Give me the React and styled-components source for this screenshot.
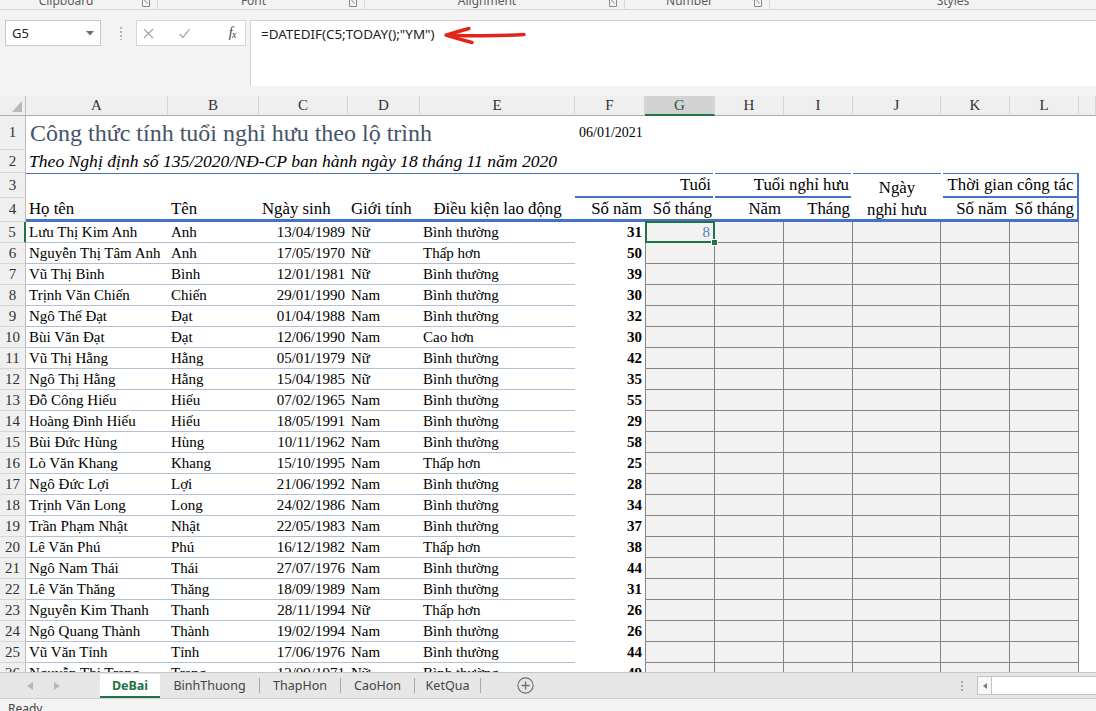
import React from 'react';
import styled, { createGlobalStyle, css } from 'styled-components';

const UI = '"Noto Sans", "Liberation Sans", Arial, sans-serif';
const SERIF = '"Liberation Serif", "Times New Roman", serif';
const BLUE = '#4472c4';
const GREEN = '#217346';

const GlobalStyle = createGlobalStyle`
  html, body { margin: 0; padding: 0; background: #fff; overflow: hidden; }
  #root { width: 1096px; height: 711px; }
`;

const Window = styled.div`
  width: 1096px;
  height: 711px;
  display: flex;
  flex-direction: column;
  overflow: hidden;
  font-family: ${SERIF};
  background: #fff;
`;

/* ---------- ribbon group labels (cut off) ---------- */
const RibbonStrip = styled.div`
  flex: none;
  height: 9px;
  display: flex;
  background: #f3f3f3;
  border-bottom: 1px solid #d6d6d6;
  overflow: hidden;
`;
const RibbonGroup = styled.div`
  flex: none;
  width: ${p => p.$w}px;
  display: flex;
  align-items: flex-start;
  border-right: ${p => (p.$last ? 'none' : '1px solid #d9d9d9')};
  box-sizing: border-box;
`;
const GroupLabel = styled.span`
  flex: 1;
  text-align: center;
  font-family: ${UI};
  font-size: 12px;
  line-height: 16px;
  margin-top: -7px;
  padding-right: ${p => p.$pr || 0}px;
  color: #5b5b5b;
`;
const LauncherIcon = styled.svg`
  flex: none;
  width: 8px;
  height: 7px;
  margin-right: 7px;
`;

/* ---------- formula bar ---------- */
const FormulaArea = styled.div`
  position: relative;
  flex: none;
  height: 86px;
  box-sizing: border-box;
  padding: 10px 0 0 5px;
  display: flex;
  align-items: flex-start;
  background: #f3f3f3;
`;
const NameBox = styled.div`
  flex: none;
  width: 96px;
  height: 26px;
  box-sizing: border-box;
  background: #fff;
  border: 1px solid #c8c8c8;
  display: flex;
  align-items: center;
  justify-content: space-between;
  padding: 0 6px 0 6px;
  font-family: ${UI};
  font-size: 13px;
  color: #222;
`;
const Grip = styled.div`
  flex: none;
  width: 2px;
  height: 14px;
  margin: 6px 14px 0 19px;
  background-image: radial-gradient(circle, #b5b5b5 0.9px, transparent 1.1px);
  background-size: 2px 4px;
`;
const FxBox = styled.div`
  flex: none;
  width: 110px;
  height: 26px;
  box-sizing: border-box;
  background: #fff;
  border: 1px solid #d6d6d6;
  display: flex;
  align-items: center;
  padding-left: 6px;
`;
const FxIcon = styled.svg`
  flex: none;
  width: 11px;
  height: 11px;
  margin-right: ${p => p.$mr}px;
`;
const FxLabel = styled.span`
  margin-left: auto;
  margin-right: 9px;
  font-family: ${SERIF};
  font-style: italic;
  font-size: 14px;
  color: #444;
  letter-spacing: -0.5px;
  sub { font-size: 10px; vertical-align: -1px; }
`;
const FormulaInput = styled.div`
  flex: 1;
  height: 66px;
  margin-left: 4px;
  box-sizing: border-box;
  background: #fff;
  border-left: 1px solid #d2d2d2;
  border-top: 1px solid #d2d2d2;
  padding: 5px 10px;
  font-family: ${UI};
  font-size: 13.4px;
  line-height: 17px;
  color: #222;
`;
const Annotation = styled.svg`
  position: absolute;
  left: 440px;
  top: 12px;
  width: 90px;
  height: 26px;
  overflow: visible;
`;

/* ---------- sheet grid ---------- */
const COLS = [26, 142, 91, 89, 72, 155, 70, 70, 69, 69, 88, 69, 69];
const Sheet = styled.div`
  flex: none;
  height: 576px;
  overflow: hidden;
  display: grid;
  grid-template-columns: ${COLS.map(w => w + 'px').join(' ')} 1fr;
  grid-template-rows: 20px 34px 23px 25px 24px;
  grid-auto-rows: 21px;
  background: #fff;
`;
const Corner = styled.div`
  background: #efefef;
  border-right: 1px solid #bdbdbd;
  border-bottom: 1px solid #ababab;
  display: flex;
  align-items: flex-end;
  justify-content: flex-end;
  padding: 0 3px 3px 0;
`;
const ColHead = styled.div`
  box-sizing: border-box;
  background: ${p => (p.$active ? '#d3d3d3' : '#efefef')};
  color: ${p => (p.$active ? '#1f5a3a' : '#333')};
  border-right: 1px solid #d4d4d4;
  border-bottom: ${p => (p.$active ? `2px solid ${GREEN}` : '1px solid #ababab')};
  display: flex;
  align-items: center;
  justify-content: center;
  font-size: 15px;
`;
const RowHead = styled.div`
  box-sizing: border-box;
  background: #efefef;
  color: #333;
  border-right: ${p => (p.$active ? `2px solid ${GREEN}` : '1px solid #bdbdbd')};
  border-bottom: 1px solid #d6d6d6;
  display: flex;
  align-items: center;
  justify-content: center;
  font-size: 15px;
`;

const justify = { start: 'flex-start', center: 'center', end: 'flex-end' };
const Cell = styled.div`
  box-sizing: border-box;
  min-width: 0;
  grid-column: span ${p => p.$span || 1};
  grid-row: span ${p => p.$rows || 1};
  display: flex;
  align-items: center;
  justify-content: ${p => justify[p.$align || 'start']};
  padding: 0 3px;
  white-space: nowrap;
  font-size: 15px;
  color: #000;
`;
const TitleCell = styled(Cell)`
  font-size: 24px;
  color: #44546a;
  padding-left: 4px;
`;
const StampCell = styled(Cell)`
  font-size: 14px;
  padding-left: 4px;
`;
const SubtitleCell = styled(Cell)`
  font-size: 17.6px;
  font-style: italic;
  padding-left: 3px;
`;
const BandCell = styled(Cell)`
  border-top: 1px solid ${BLUE};
`;
const GroupHead = styled(Cell)`
  font-size: 16.8px;
  border-top: 1px solid ${BLUE};
  border-bottom: 2px solid ${BLUE};
  margin: 0 ${p => p.$mr || 0}px 0 ${p => p.$ml || 0}px;
  padding-right: 2px;
  ${p => p.$edge && css`border-right: 2px solid ${BLUE};`}
`;
const StackHead = styled(Cell)`
  font-size: 16.8px;
  flex-direction: column;
  align-items: center;
  justify-content: flex-start;
  padding-top: 3px;
  line-height: 22px;
  border-top: 1px solid ${BLUE};
  border-bottom: 3px solid ${BLUE};
`;
const ColTitle = styled(Cell)`
  font-size: 16.8px;
  align-items: flex-end;
  line-height: 20px;
  border-bottom: 3px solid ${BLUE};
  ${p => p.$edge && css`border-right: 2px solid ${BLUE};`}
`;
const LinedCell = styled(Cell)`
  border-bottom: 1px solid #b3bfd5;
`;
const YearsCell = styled(Cell)`
  font-weight: bold;
  justify-content: flex-end;
`;
const EntryCell = styled(Cell)`
  position: relative;
  justify-content: flex-end;
  padding-right: 4px;
  background: #f2f2f2;
  border-right: 1px solid #858585;
  border-bottom: 1px solid #858585;
  color: #5a7dbd;
  ${p => p.$first && css`border-left: 1px solid #858585;`}
  ${p => p.$selected && css`
    z-index: 2;
    &::after {
      content: '';
      position: absolute;
      left: -1px; top: -1px; right: -1px; bottom: -1px;
      border: 2px solid ${GREEN};
      pointer-events: none;
    }
    &::before {
      content: '';
      position: absolute;
      right: -4px; bottom: -4px;
      width: 5px; height: 5px;
      background: ${GREEN};
      border: 1px solid #fff;
      z-index: 3;
    }
  `}
`;
const BlankCell = styled(Cell)``;

/* ---------- sheet tabs & status ---------- */
const TabBar = styled.div`
  flex: none;
  height: 27px;
  box-sizing: border-box;
  display: flex;
  align-items: stretch;
  background: #e6e6e6;
  border-top: 1px solid #c6c6c6;
  border-bottom: 1px solid #d0d0d0;
  font-family: ${UI};
`;
const NavArea = styled.div`
  flex: none;
  width: 100px;
  display: flex;
  align-items: center;
  padding-left: 27px;
  gap: 21px;
  box-sizing: border-box;
`;
const NavArrow = styled.svg`
  width: 6px;
  height: 8px;
`;
const SheetTab = styled.div`
  flex: none;
  width: ${p => p.$w}px;
  box-sizing: border-box;
  display: flex;
  align-items: center;
  justify-content: center;
  font-size: 12.5px;
  white-space: nowrap;
  position: relative;
  ${p => p.$active
    ? css`
      background: #fff;
      color: ${GREEN};
      font-weight: bold;
      border-bottom: 2px solid ${GREEN};
      margin-top: 1px;
    `
    : css`
      color: #444;
      border-right: 1px solid #a8a8a8;
      margin: 5px 0;
    `}
`;
const AddSheet = styled.svg`
  flex: none;
  width: 17px;
  height: 17px;
  align-self: center;
  margin-left: 36px;
`;
const RightTools = styled.div`
  margin-left: auto;
  display: flex;
  align-items: center;
`;
const ToolGrip = styled.div`
  width: 2px;
  height: 12px;
  margin-right: 14px;
  background-image: radial-gradient(circle, #a9a9a9 0.9px, transparent 1.1px);
  background-size: 2px 4px;
`;
const HScroll = styled.div`
  width: 119px;
  height: 19px;
  box-sizing: border-box;
  border: 1px solid #c3c3c3;
  border-right: none;
  background: #fff;
  display: flex;
`;
const ScrollBtn = styled.div`
  width: 13px;
  border-right: 1px solid #c3c3c3;
  display: flex;
  align-items: center;
  justify-content: center;
  background: #f7f7f7;
`;
const StatusBar = styled.div`
  flex: 1;
  background: #f3f3f3;
  font-family: ${UI};
  font-size: 12px;
  line-height: 16px;
  color: #444;
  padding: 2px 0 0 8px;
  overflow: hidden;
`;

/* ---------- data ---------- */
const groups = [
  { label: 'Clipboard', w: 158, pr: 10 },
  { label: 'Font', w: 207 },
  { label: 'Alignment', w: 260 },
  { label: 'Number', w: 145 },
  { label: 'Styles', w: 366, last: true },
];

const letters = ['A', 'B', 'C', 'D', 'E', 'F', 'G', 'H', 'I', 'J', 'K', 'L', ''];

const people = [
  ['Lưu Thị Kim Anh', 'Anh', '13/04/1989', 'Nữ', 'Bình thường', 31],
  ['Nguyễn Thị Tâm Anh', 'Anh', '17/05/1970', 'Nữ', 'Thấp hơn', 50],
  ['Vũ Thị Bình', 'Bình', '12/01/1981', 'Nữ', 'Bình thường', 39],
  ['Trịnh Văn Chiến', 'Chiến', '29/01/1990', 'Nam', 'Bình thường', 30],
  ['Ngô Thế Đạt', 'Đạt', '01/04/1988', 'Nam', 'Bình thường', 32],
  ['Bùi Văn Đạt', 'Đạt', '12/06/1990', 'Nam', 'Cao hơn', 30],
  ['Vũ Thị Hằng', 'Hằng', '05/01/1979', 'Nữ', 'Bình thường', 42],
  ['Ngô Thị Hằng', 'Hằng', '15/04/1985', 'Nữ', 'Bình thường', 35],
  ['Đỗ Công Hiếu', 'Hiếu', '07/02/1965', 'Nam', 'Bình thường', 55],
  ['Hoàng Đình Hiếu', 'Hiếu', '18/05/1991', 'Nam', 'Bình thường', 29],
  ['Bùi Đức Hùng', 'Hùng', '10/11/1962', 'Nam', 'Bình thường', 58],
  ['Lò Văn Khang', 'Khang', '15/10/1995', 'Nam', 'Thấp hơn', 25],
  ['Ngô Đức Lợi', 'Lợi', '21/06/1992', 'Nam', 'Bình thường', 28],
  ['Trịnh Văn Long', 'Long', '24/02/1986', 'Nam', 'Bình thường', 34],
  ['Trần Phạm Nhật', 'Nhật', '22/05/1983', 'Nam', 'Bình thường', 37],
  ['Lê Văn Phú', 'Phú', '16/12/1982', 'Nam', 'Thấp hơn', 38],
  ['Ngô Nam Thái', 'Thái', '27/07/1976', 'Nam', 'Bình thường', 44],
  ['Lê Văn Thăng', 'Thăng', '18/09/1989', 'Nam', 'Bình thường', 31],
  ['Nguyễn Kim Thanh', 'Thanh', '28/11/1994', 'Nữ', 'Thấp hơn', 26],
  ['Ngô Quang Thành', 'Thành', '19/02/1994', 'Nam', 'Bình thường', 26],
  ['Vũ Văn Tỉnh', 'Tỉnh', '17/06/1976', 'Nam', 'Bình thường', 44],
  ['Nguyễn Thị Trang', 'Trang', '12/09/1971', 'Nữ', 'Bình thường', 49],
];

const tabs = [
  { name: 'DeBai', w: 60, active: true },
  { name: 'BinhThuong', w: 100 },
  { name: 'ThapHon', w: 81 },
  { name: 'CaoHon', w: 74 },
  { name: 'KetQua', w: 66 },
];

function Blanks({ n, prefix }) {
  return Array.from({ length: n }, (_, i) => <BlankCell key={prefix + i} />);
}

export default function App() {
  return (
    <>
      <GlobalStyle />
      <Window>
        <RibbonStrip>
          {groups.map(g => (
            <RibbonGroup key={g.label} $w={g.w} $last={g.last}>
              <GroupLabel $pr={g.pr}>{g.label}</GroupLabel>
              {!g.last && (
                <LauncherIcon viewBox="0 0 8 7">
                  <path d="M0.5 0 V6.5 H7.5 V0" fill="none" stroke="#8a8a8a" strokeWidth="1" />
                  <path d="M2.5 0 L5.5 3.5" stroke="#8a8a8a" strokeWidth="1" />
                </LauncherIcon>
              )}
            </RibbonGroup>
          ))}
        </RibbonStrip>

        <FormulaArea>
          <NameBox>
            <span>G5</span>
            <svg width="8" height="5" viewBox="0 0 8 5">
              <path d="M0 0 H8 L4 4.5 Z" fill="#6b6b6b" />
            </svg>
          </NameBox>
          <Grip />
          <FxBox>
            <FxIcon viewBox="0 0 11 11" $mr={25}>
              <path d="M1 1 L10 10 M10 1 L1 10" stroke="#a9a9a9" strokeWidth="1.3" fill="none" />
            </FxIcon>
            <FxIcon viewBox="0 0 11 11" $mr={0}>
              <path d="M0.8 6 L4 9.5 L10.5 1.2" stroke="#a9a9a9" strokeWidth="1.3" fill="none" />
            </FxIcon>
            <FxLabel>f<sub>x</sub></FxLabel>
          </FxBox>
          <FormulaInput>=DATEDIF(C5;TODAY();"YM")</FormulaInput>
          <Annotation viewBox="0 0 90 26">
            <path d="M84 12.5 Q55 14.5 8 13.2" stroke="#e3241d" strokeWidth="3.4" fill="none" strokeLinecap="round" />
            <path d="M29 6.5 Q16 10 6 13.2 Q18 17 32 20.5" stroke="#e3241d" strokeWidth="3.4" fill="none" strokeLinecap="round" strokeLinejoin="round" />
          </Annotation>
        </FormulaArea>

        <Sheet>
          <Corner>
            <svg width="10" height="11" viewBox="0 0 10 11">
              <path d="M10 0 V11 H0 Z" fill="#b9b9b9" />
            </svg>
          </Corner>
          {letters.map((l, i) => (
            <ColHead key={'h' + i} $active={l === 'G'}>{l}</ColHead>
          ))}

          <RowHead>1</RowHead>
          <TitleCell $span={5}>Công thức tính tuổi nghỉ hưu theo lộ trình</TitleCell>
          <StampCell>06/01/2021</StampCell>
          <Blanks n={7} prefix="r1" />

          <RowHead>2</RowHead>
          <SubtitleCell $span={5}>Theo Nghị định số 135/2020/NĐ-CP ban hành ngày 18 tháng 11 năm 2020</SubtitleCell>
          <Blanks n={8} prefix="r2" />

          <RowHead>3</RowHead>
          <BandCell $span={5} />
          <GroupHead $span={2} $align="end" $mr={2}>Tuổi</GroupHead>
          <GroupHead $span={2} $align="end" $mr={2}>Tuổi nghỉ hưu</GroupHead>
          <StackHead $rows={2}>
            <span>Ngày</span>
            <span>nghỉ hưu</span>
          </StackHead>
          <GroupHead $span={2} $align="center" $ml={2} $edge>Thời gian công tác</GroupHead>
          <BlankCell />

          <RowHead>4</RowHead>
          <ColTitle>Họ tên</ColTitle>
          <ColTitle>Tên</ColTitle>
          <ColTitle>Ngày sinh</ColTitle>
          <ColTitle>Giới tính</ColTitle>
          <ColTitle $align="center">Điều kiện lao động</ColTitle>
          <ColTitle $align="end">Số năm</ColTitle>
          <ColTitle $align="end">Số tháng</ColTitle>
          <ColTitle $align="end">Năm</ColTitle>
          <ColTitle $align="end">Tháng</ColTitle>
          <ColTitle $align="end">Số năm</ColTitle>
          <ColTitle $align="end" $edge>Số tháng</ColTitle>
          <BlankCell />

          {people.map((p, i) => {
            const row = i + 5;
            return (
              <React.Fragment key={'row' + row}>
                <RowHead $active={row === 5}>{row}</RowHead>
                <LinedCell>{p[0]}</LinedCell>
                <LinedCell>{p[1]}</LinedCell>
                <LinedCell $align="end">{p[2]}</LinedCell>
                <LinedCell>{p[3]}</LinedCell>
                <LinedCell>{p[4]}</LinedCell>
                <YearsCell>{p[5]}</YearsCell>
                <EntryCell $first $selected={row === 5}>{row === 5 ? '8' : ''}</EntryCell>
                <EntryCell />
                <EntryCell />
                <EntryCell />
                <EntryCell />
                <EntryCell />
                <BlankCell />
              </React.Fragment>
            );
          })}
        </Sheet>

        <TabBar>
          <NavArea>
            <NavArrow viewBox="0 0 6 8"><path d="M6 0 V8 L0 4 Z" fill="#b8b8b8" /></NavArrow>
            <NavArrow viewBox="0 0 6 8"><path d="M0 0 V8 L6 4 Z" fill="#b8b8b8" /></NavArrow>
          </NavArea>
          {tabs.map(t => (
            <SheetTab key={t.name} $w={t.w} $active={t.active}>{t.name}</SheetTab>
          ))}
          <AddSheet viewBox="0 0 17 17">
            <circle cx="8.5" cy="8.5" r="7.6" fill="none" stroke="#6e6e6e" strokeWidth="1.1" />
            <path d="M8.5 4.5 V12.5 M4.5 8.5 H12.5" stroke="#6e6e6e" strokeWidth="1.3" />
          </AddSheet>
          <RightTools>
            <ToolGrip />
            <HScroll>
              <ScrollBtn>
                <svg width="4" height="6" viewBox="0 0 4 6"><path d="M4 0 V6 L0 3 Z" fill="#7a7a7a" /></svg>
              </ScrollBtn>
            </HScroll>
          </RightTools>
        </TabBar>
        <StatusBar>Ready</StatusBar>
      </Window>
    </>
  );
}
